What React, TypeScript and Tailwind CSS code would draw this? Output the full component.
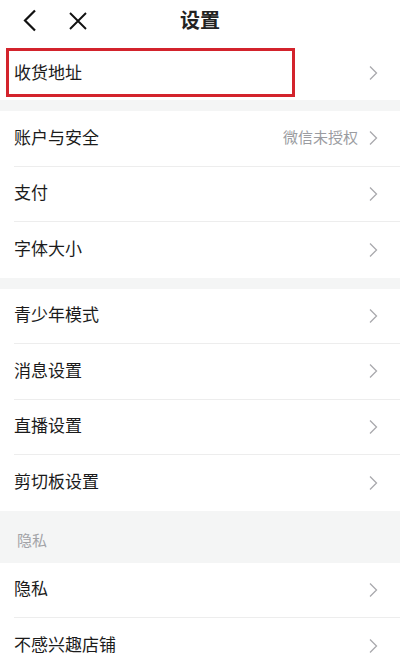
import React from "react";

const font = { fontFamily: '"Noto Sans CJK SC", "Noto Sans", sans-serif' };

type Item = { label: string; note?: string };

const groups: Item[][] = [
  [{ label: "账户与安全", note: "微信未授权" }, { label: "支付" }, { label: "字体大小" }],
  [{ label: "青少年模式" }, { label: "消息设置" }, { label: "直播设置" }, { label: "剪切板设置" }],
];

function Chevron() {
  return (
    <svg width="10" height="16" viewBox="0 0 10 16" className="shrink-0">
      <path d="M2 1.5 L8.5 8 L2 14.5" fill="none" stroke="#a9a9ad" strokeWidth="1.3" />
    </svg>
  );
}

function Row({ item, last }: { item: Item; last?: boolean }) {
  return (
    <div className="h-[55.5px] pl-[14px] bg-white">
      <div className={`h-full flex items-center pr-[22px] ${last ? "" : "border-b border-[#ededed]"}`}>
        <div className="flex-1 text-[17px] text-[#1b1b1b] leading-none pb-[4px]">{item.label}</div>
        {item.note && <div className="text-[15px] text-[#9b9ca1] mr-[10px] leading-none pb-[4px]">{item.note}</div>}
        <Chevron />
      </div>
    </div>
  );
}

export default function App() {
  return (
    <div className="w-[400px] h-[662px] overflow-hidden bg-[#f4f5f5] relative" style={font}>
      <div className="h-[45px] bg-white flex items-center relative">
        <svg width="14" height="24" viewBox="0 0 14 24" className="absolute left-[23px] top-[9px]">
          <path d="M12 1.5 L2 11.5 L12 21.5" fill="none" stroke="#111" strokeWidth="2.2" />
        </svg>
        <svg width="20" height="20" viewBox="0 0 20 20" className="absolute left-[68px] top-[11px]">
          <path d="M2 2 L18 18 M18 2 L2 18" fill="none" stroke="#111" strokeWidth="1.9" />
        </svg>
        <div className="w-full text-center text-[20px] font-bold text-[#222] leading-none pb-[5px]">设置</div>
      </div>

      <div className="h-[55px] bg-white flex items-center pl-[14px] pr-[22px]">
        <div className="flex-1 text-[17px] text-[#1b1b1b] leading-none pb-[3px]">收货地址</div>
        <Chevron />
      </div>

      <div className="h-[11px]" />
      {groups[0].map((it, i) => (
        <Row key={it.label} item={it} last={i === groups[0].length - 1} />
      ))}
      <div className="h-[11px]" />
      {groups[1].map((it, i) => (
        <Row key={it.label} item={it} last={i === groups[1].length - 1} />
      ))}

      <div className="h-[52px] flex items-end pl-[17px] pb-[16px]">
        <div className="text-[15px] text-[#a2a3a7] leading-none">隐私</div>
      </div>
      <Row item={{ label: "隐私" }} />
      <Row item={{ label: "不感兴趣店铺" }} last />

      <div className="absolute left-[6px] top-[48px] w-[289px] h-[49px] border-[3px] border-[#d3232c]" />
    </div>
  );
}
